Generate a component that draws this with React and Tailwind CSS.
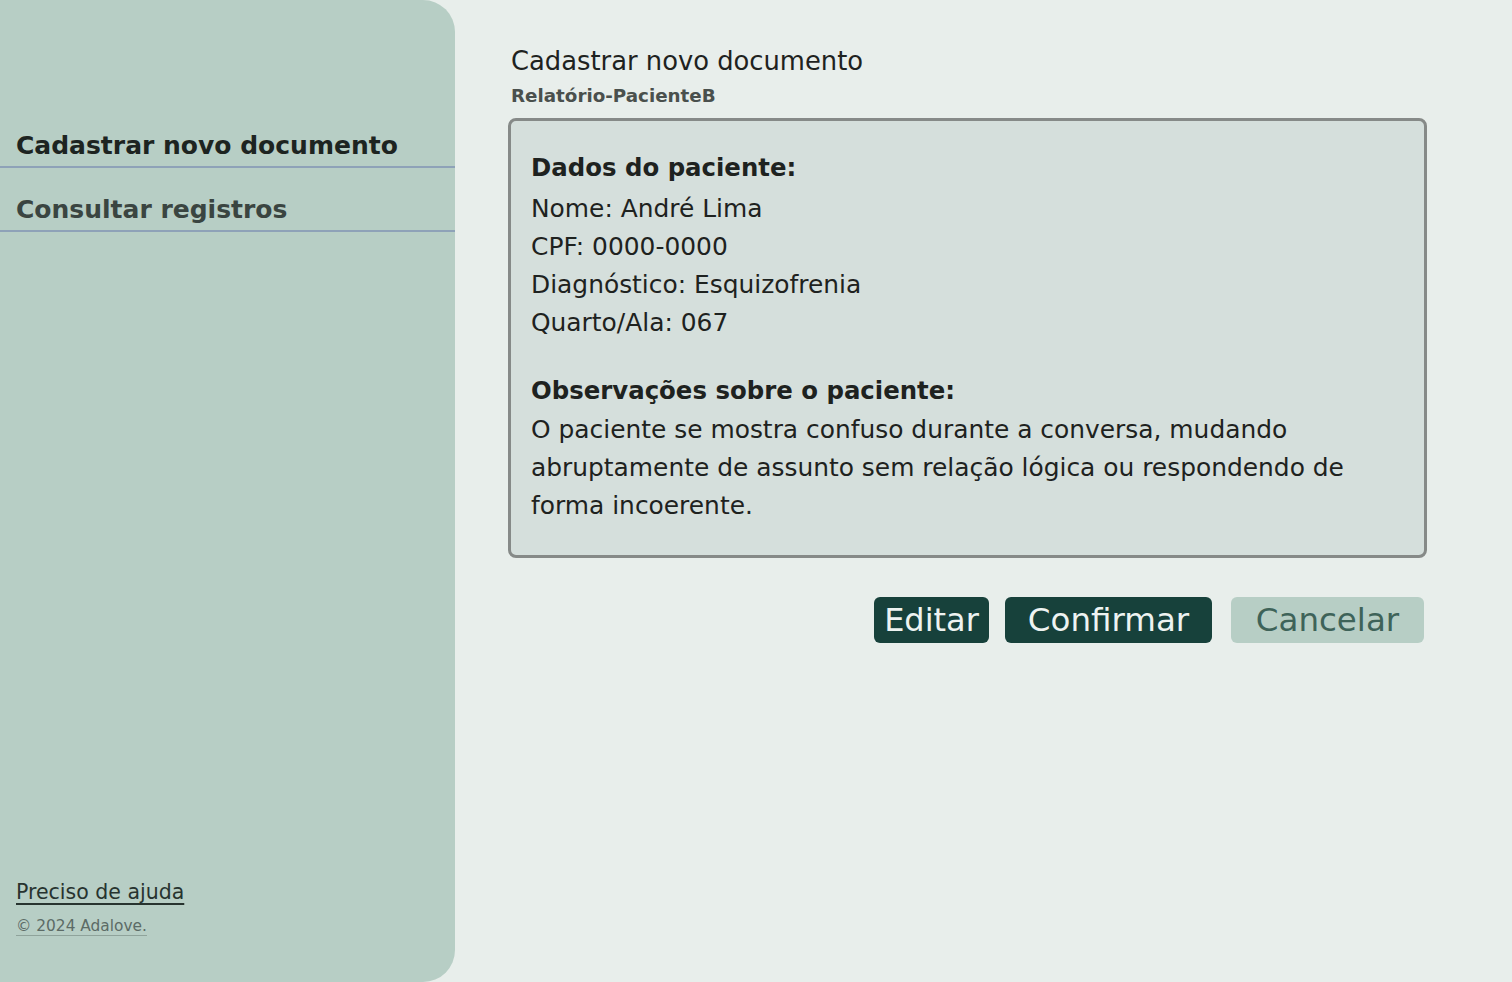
import React from "react";

const font = { fontFamily: "'DejaVu Sans', 'Open Sans', sans-serif" };

function SideLink({ label, active }) {
  return (
    <a
      href="#"
      className={`block border-b-2 border-[#8ea2b8] pl-4 pb-[3px] pt-[11px] text-[25px] font-semibold leading-[34px] ${active ? "text-[#1d2421]" : "text-[#3a4541]"}`}
    >
      {label}
    </a>
  );
}

function Sidebar() {
  return (
    <aside className="flex h-[982px] w-[455px] shrink-0 flex-col rounded-r-[32px] bg-[#b7cec5]">
      <nav className="mt-[118px] flex flex-col gap-[14px]">
        <SideLink label="Cadastrar novo documento" active />
        <SideLink label="Consultar registros" />
      </nav>
      <div className="mt-auto mb-[46px] flex flex-col gap-[11px] pl-4">
        <a href="#" className="text-[20.5px] leading-[26px] text-[#27332f] underline underline-offset-[4px]">
          Preciso de ajuda
        </a>
        <span className="text-[15.4px] leading-[20px] text-[#5c6b66] underline decoration-[#8fa39b] underline-offset-[4px]">
          © 2024 Adalove.
        </span>
      </div>
    </aside>
  );
}

export default function App() {
  return (
    <div style={font} className="flex h-[982px] w-full overflow-hidden bg-[#e8eeeb]">
      <Sidebar />
      <main className="flex flex-1 flex-col pl-[53px] pr-[85px] pt-[46px]">
        <h1 className="pl-[3px] text-[25.8px] leading-[30px] text-[#1e2220]">Cadastrar novo documento</h1>
        <p className="mt-[9px] pl-[3px] text-[18.3px] font-semibold leading-[22px] text-[#4a504d]">Relatório-PacienteB</p>
        <section className="mt-[11px] rounded-[8px] border-[3px] border-[#868a88] bg-[#d5dfdc] px-[20px] pt-[29px] pb-[30px] text-[#1e2220]">
          <h2 className="mb-[4px] text-[24.4px] font-semibold leading-[36px]">Dados do paciente:</h2>
          <div className="text-[24.9px] leading-[38px]">
            <p>Nome: André Lima</p>
            <p>CPF: 0000-0000</p>
            <p>Diagnóstico: Esquizofrenia</p>
            <p>Quarto/Ala: 067</p>
          </div>
          <h2 className="mt-[31px] mb-[2px] text-[24.4px] font-semibold leading-[36px]">Observações sobre o paciente:</h2>
          <p className="text-[24.9px] leading-[38px]">
            O paciente se mostra confuso durante a conversa, mudando
            <br />
            abruptamente de assunto sem relação lógica ou respondendo de
            <br />
            forma incoerente.
          </p>
        </section>
        <div className="mt-[39px] flex justify-end pr-[3px]">
          <button className="h-[46px] w-[115px] rounded-[6px] bg-[#17413b] text-[32px] leading-[46px] text-[#eef3f1]">Editar</button>
          <button className="ml-[16px] h-[46px] w-[207px] rounded-[6px] bg-[#17413b] text-[32.5px] leading-[46px] text-[#eef3f1]">Confirmar</button>
          <button className="ml-[19px] h-[46px] w-[193px] rounded-[6px] bg-[#b7cec5] text-[32.5px] leading-[46px] text-[#3e6359]">Cancelar</button>
        </div>
      </main>
    </div>
  );
}
